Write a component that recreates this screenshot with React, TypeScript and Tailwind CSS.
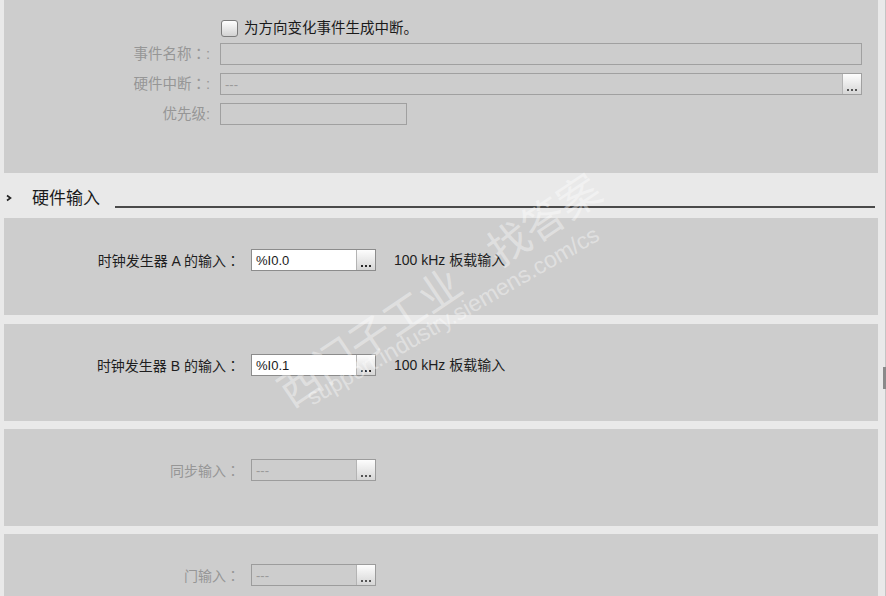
import React from "react";

const Colon = () => <span className="font-['Noto_Sans_CJK_TC',sans-serif]">：</span>;

const Dots = ({ dark = true }: { dark?: boolean }) => (
  <div className="flex gap-[2px]">
    <span className={`block w-[2px] h-[2px] ${dark ? "bg-[#2a2a2a]" : "bg-[#555]"}`} />
    <span className={`block w-[2px] h-[2px] ${dark ? "bg-[#2a2a2a]" : "bg-[#555]"}`} />
    <span className={`block w-[2px] h-[2px] ${dark ? "bg-[#2a2a2a]" : "bg-[#555]"}`} />
  </div>
);

const EllBtn = ({ dark = true }: { dark?: boolean }) => (
  <div className="w-[19px] h-full shrink-0 border-l border-[#b4b4b4] bg-linear-to-b from-[#fdfdfd] to-[#d6d6d6] flex items-end justify-center pb-[3px]">
    <Dots dark={dark} />
  </div>
);

const Field = ({ value, enabled }: { value: string; enabled: boolean }) => (
  <div
    className={`w-[125px] h-[22px] flex border ${
      enabled ? "border-[#8c8c8c] bg-white" : "border-[#9c9c9c] bg-[#cdcdcd]"
    }`}
  >
    <div
      className={`flex-1 flex items-center pl-[4px] text-[13px] leading-none ${
        enabled ? "text-[#1a1a1a]" : "text-[#9a9a9a]"
      }`}
    >
      {value}
    </div>
    <EllBtn dark={enabled} />
  </div>
);

const IOPanel = ({
  label,
  value,
  enabled,
  extra,
  pt,
}: {
  label: React.ReactNode;
  value: string;
  enabled: boolean;
  extra?: boolean;
  pt: string;
}) => (
  <div className={`h-[97px] bg-[#cdcdcd] ${pt}`}>
    <div className="flex items-center h-[22px]">
      <div
        className={`w-[236px] text-right text-[14px] leading-none ${
          enabled ? "text-[#1e1e1e]" : "text-[#969696]"
        }`}
      >
        {label}
      </div>
      <div className="ml-[11px]">
        <Field value={value} enabled={enabled} />
      </div>
      {extra && (
        <div className="ml-[18px] text-[14px] leading-none text-[#1e1e1e]">100 kHz 板载输入</div>
      )}
    </div>
  </div>
);

export default function App() {
  return (
    <div className="relative w-[886px] h-[596px] overflow-hidden bg-[#e9e9e9] font-['Liberation_Sans','Noto_Sans_CJK_SC',sans-serif]">
      <div className="w-[874px] ml-[4px] flex flex-col">
        {/* Panel 1 */}
        <div className="h-[173px] bg-[#cdcdcd] pt-[17px]">
          <div className="flex items-center h-[22px]">
            <div className="w-[206px]" />
            <div className="ml-[11px] w-[17px] h-[17px] rounded-[3px] border border-[#7c7c7c] bg-linear-to-b from-white to-[#d2d2d2]" />
            <div className="ml-[6px] text-[14.5px] leading-none text-[#1a1a1a]">为方向变化事件生成中断。</div>
          </div>
          <div className="mt-[4px] flex flex-col gap-[8px]">
            <div className="flex items-center h-[22px]">
              <div className="w-[206px] text-right text-[14.5px] leading-none text-[#969696]">
                事件名称<Colon />:
              </div>
              <div className="ml-[10px] w-[642px] h-[22px] border border-[#a0a0a0] bg-[#cdcdcd]" />
            </div>
            <div className="flex items-center h-[22px]">
              <div className="w-[206px] text-right text-[14.5px] leading-none text-[#969696]">
                硬件中断<Colon />:
              </div>
              <div className="ml-[10px] w-[642px] h-[22px] border border-[#a0a0a0] bg-[#cdcdcd] flex">
                <div className="flex-1 flex items-center pl-[4px] text-[13px] leading-none text-[#9a9a9a]">---</div>
                <EllBtn dark={false} />
              </div>
            </div>
            <div className="flex items-center h-[22px]">
              <div className="w-[206px] text-right text-[14.5px] leading-none text-[#969696]">优先级:</div>
              <div className="ml-[10px] w-[187px] h-[22px] border border-[#a0a0a0] bg-[#cdcdcd]" />
            </div>
          </div>
        </div>

        {/* Section header */}
        <div className="h-[45px] flex items-center -ml-[4px]">
          <svg width="8" height="8" viewBox="0 0 8 8" className="ml-[5px] mt-[4px]">
            <path d="M2 1.5 L5.5 4 L2 6.5" fill="none" stroke="#222" strokeWidth="1.6" />
          </svg>
          <div className="ml-[19px] mt-[6px] text-[17px] leading-none text-[#1a1a1a]">硬件输入</div>
          <div className="ml-[15px] mt-[22px] h-[2px] w-[760px] bg-[#4a4a4a]" />
        </div>

        <IOPanel label={<>时钟发生器 A 的输入<Colon /></>} value="%I0.0" enabled extra pt="pt-[31px]" />
        <div className="h-[9px]" />
        <IOPanel label={<>时钟发生器 B 的输入<Colon /></>} value="%I0.1" enabled extra pt="pt-[30px]" />
        <div className="h-[8px]" />
        <IOPanel label={<>同步输入<Colon /></>} value="---" enabled={false} pt="pt-[30px]" />
        <div className="h-[8px]" />
        <IOPanel label={<>门输入<Colon /></>} value="---" enabled={false} pt="pt-[30px]" />
      </div>

      {/* right scrollbar edge */}
      <div className="absolute right-0 top-0 w-[1px] h-full bg-[#c4c4c4]" />
      <div className="absolute right-0 top-[367px] w-[3px] h-[22px] bg-[#8a8a8a]" />

      {/* watermark */}
      <div className="pointer-events-none absolute left-[438px] top-[288px] -translate-x-1/2 -translate-y-1/2 -rotate-[34deg] whitespace-nowrap text-[42px] leading-none text-white/40 font-['Noto_Sans_CJK_SC',sans-serif]">
        西门子工业　找答案
      </div>
      <div className="pointer-events-none absolute left-[453px] top-[316px] -translate-x-1/2 -translate-y-1/2 -rotate-[30deg] whitespace-nowrap text-[23px] leading-none text-white/40 font-['Liberation_Sans',sans-serif]">
        support.industry.siemens.com/cs
      </div>
    </div>
  );
}
